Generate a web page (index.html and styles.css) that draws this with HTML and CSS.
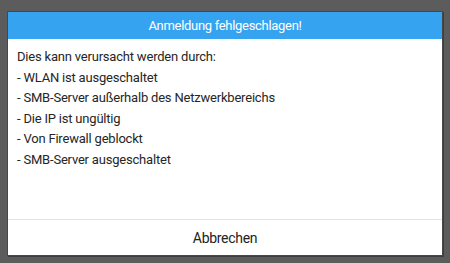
FILE: index.html
```html
<!DOCTYPE html>
<html lang="de">
<head>
<meta charset="utf-8">
<link rel="stylesheet" href="styles.css">
</head>
<body>
<div class="screen">
  <div class="dialog">
    <div class="title">Anmeldung fehlgeschlagen!</div>
    <div class="content">
      <p>Dies kann verursacht werden durch:</p>
      <p>- WLAN ist ausgeschaltet</p>
      <p>- SMB-Server außerhalb des Netzwerkbereichs</p>
      <p>- Die IP ist ungültig</p>
      <p>- Von Firewall geblockt</p>
      <p>- SMB-Server ausgeschaltet</p>
    </div>
    <div class="actions">
      <button class="btn">Abbrechen</button>
    </div>
  </div>
</div>
</body>
</html>
```
FILE: styles.css
```css
html, body {
  margin: 0;
  padding: 0;
  width: 450px;
  height: 263px;
  overflow: hidden;
  background: #5b5c5b;
  font-family: Roboto, "Noto Sans", sans-serif;
}
.screen {
  padding: 12px 8px 0 8px;
}
.dialog {
  width: 434px;
  height: 243px;
  background: #fff;
  display: flex;
  flex-direction: column;
  box-shadow: 0 0 0 1px #474847, 1px 1px 0 1px #3e3f3e;
}
.title {
  height: 27px;
  background: #35a3ef;
  color: #fff;
  font-size: 13px;
  letter-spacing: -0.3px;
  line-height: 27px;
  text-align: center;
}
.content {
  flex: 1;
  padding: 8px 0 0 9px;
  color: #262626;
  font-size: 13px;
  letter-spacing: -0.2px;
  line-height: 20.5px;
}
.content p {
  margin: 0;
}
.actions {
  height: 35px;
  border-top: 1px solid #e4e4e4;
  display: flex;
}
.btn {
  flex: 1;
  border: 0;
  background: transparent;
  font-family: Roboto, "Noto Sans", sans-serif;
  font-size: 14px;
  letter-spacing: -0.3px;
  color: #222;
  padding: 0;
}
```
